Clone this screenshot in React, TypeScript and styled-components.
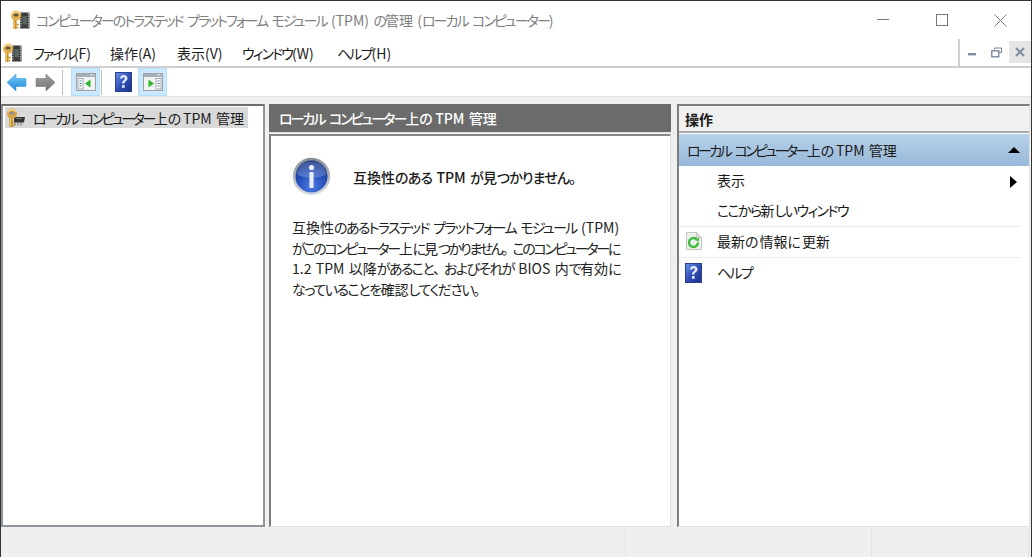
import React from "react";
import styled, { createGlobalStyle } from "styled-components";

const Global = createGlobalStyle`
  html, body { margin: 0; padding: 0; background: #fff; }
  #root { width: 1032px; height: 557px; overflow: hidden; }
  * { box-sizing: border-box; }
`;

const Win = styled.div`
  width: 1032px;
  height: 557px;
  display: flex;
  flex-direction: column;
  border-top: 1px solid #333;
  border-left: 1px solid #333;
  border-right: 1px solid #333;
  font-family: "Noto Sans CJK JP", "Noto Sans", sans-serif;
  font-feature-settings: "palt";
  font-size: 14px;
  color: #1a1a1a;
  background: #fff;
`;

const Kana = styled.span`
  letter-spacing: var(--k, -1.45px);
`;
const Punct = styled.span`
  font-feature-settings: normal;
  letter-spacing: -3px;
`;
const Gap = styled.span`
  word-spacing: 1.2px;
`;

/* Kana runs are set tighter than kanji and Latin, as the narrow-kana UI font of the reference does. */
const J = ({ children }: { children: string }) => {
  const parts = children.split(/([\u3041-\u309f\u30a0-\u30ff]+|[、。])/).filter(Boolean);
  return (
    <>
      {parts.map((p, i) =>
        /^[、。]$/.test(p) ? (
          <Punct key={i}>{p}</Punct>
        ) : /^[\u3041-\u30ff]/.test(p) ? (
          <Kana key={i}>{p}</Kana>
        ) : (
          <Gap key={i}>{p}</Gap>
        )
      )}
    </>
  );
};

const TitleBar = styled.div`
  height: 38px;
  flex: none;
  display: flex;
  align-items: center;
  padding-left: 9px;
  gap: 6px;
`;
const TitleText = styled.div`
  flex: 1;
  color: #808080;
  font-size: 14px;
  white-space: pre;
  --k: -1.95px;
  margin-top: -1px;
`;
const Caption = styled.div`
  width: 59px;
  height: 38px;
  display: flex;
  align-items: center;
  justify-content: center;
`;
const Captions = styled.div`
  display: flex;
  margin-right: 1px;
`;

const MenuBar = styled.div`
  height: 29px;
  flex: none;
  display: flex;
  align-items: center;
  padding-left: 1px;
  border-bottom: 2px solid #cfcfcf;
`;
const MenuItems = styled.div`
  display: flex;
  flex: 1;
  margin-left: 11px;
  --k: -1.9px;
`;
const MenuItem = styled.span<{ $w: number }>`
  width: ${(p) => p.$w}px;
  font-size: 14px;
  white-space: nowrap;
`;
const Mdi = styled.div`
  align-self: stretch;
  display: flex;
  gap: 2px;
  padding: 2px 0 3px 1px;
  border-left: 2px solid #cfcfcf;
  margin-bottom: -2px;
  border-bottom: 2px solid #cfcfcf;
`;
const MdiBtn = styled.div<{ $on?: boolean }>`
  width: 22px;
  display: flex;
  align-items: center;
  justify-content: center;
  background: ${(p) => (p.$on ? "#e5e5e5" : "#fff")};
`;

const ToolBar = styled.div`
  height: 29px;
  flex: none;
  display: flex;
  align-items: center;
  padding-left: 5px;
  border-bottom: 1px solid #e4e4e4;
`;
const Sep = styled.div<{ $l: number; $r: number }>`
  width: 1px;
  height: 25px;
  background: #bdbdbd;
  margin: 0 ${(p) => p.$r}px 0 ${(p) => p.$l}px;
`;
const ToolBtn = styled.div`
  width: 29px;
  height: 28px;
  display: flex;
  align-items: center;
  justify-content: center;
  background: #cce8ff;
  border: 1px solid #b5deff;
`;
const IconCell = styled.div<{ $w: number; $mr?: number }>`
  width: ${(p) => p.$w}px;
  margin-right: ${(p) => p.$mr ?? 0}px;
  display: flex;
  justify-content: center;
  align-items: center;
`;

const Main = styled.div`
  flex: 1;
  min-height: 0;
  display: flex;
  background: #efefef;
  padding: 7px 0 0 0;
`;
const Tree = styled.div`
  width: 264px;
  background: #fff;
  border: 2px solid #8f959b;
  border-top-color: #6d6d6d;
  padding: 1px 2px;
  margin-right: 4px;
`;
const TreeRow = styled.div`
  height: 21px;
  width: 243px;
  background: #d9d9d9;
  display: flex;
  align-items: center;
  padding-left: 1px;
  gap: 7px;
  white-space: pre;
  --k: -2.5px;
  svg { flex: none; }
`;
const Center = styled.div`
  width: 402px;
  display: flex;
  flex-direction: column;
  margin-right: 6px;
`;
const CenterHead = styled.div`
  height: 29px;
  flex: none;
  background: #6b6b6b;
  color: #fff;
  font-weight: 500;
  display: flex;
  align-items: center;
  padding-left: 10px;
  border-bottom: 1px solid #e4e4e4;
  white-space: pre;
  --k: -2px;
`;
const CenterBody = styled.div`
  flex: 1;
  margin-top: 1px;
  background: #fff;
  border-top: 2px solid #8a8a8a;
  border-left: 2px solid #7d7d7d;
  border-right: 1px solid #e2e2e2;
  border-bottom: 1px solid #e2e2e2;
  padding: 20px 0 0 21px;
`;
const InfoRow = styled.div`
  display: flex;
  align-items: center;
  gap: 22px;
  height: 40px;
`;
const InfoTitle = styled.div`
  font-weight: 500;
  font-size: 14px;
  white-space: pre;
  margin-top: 2px;
  --k: -0.85px;
`;
const Para = styled.div`
  margin-top: 21px;
  line-height: 20.67px;
  color: #222;
`;
const ParaLine = styled.div<{ $k: number }>`
  white-space: pre;
  --k: ${(p) => p.$k}px;
`;
const Actions = styled.div`
  flex: 1;
  display: flex;
  flex-direction: column;
  background: #fff;
  border-top: 2px solid #7d7d7d;
  border-left: 2px solid #7d7d7d;
  border-right: 1px solid #e2e2e2;
  border-bottom: 1px solid #e2e2e2;
  margin-right: 1px;
`;
const ActionsHead = styled.div`
  height: 27px;
  flex: none;
  background: #f0f0f0;
  border-bottom: 2px solid #a8a8a8;
  font-weight: 700;
  padding-left: 6px;
  display: flex;
  align-items: center;
`;
const Section = styled.div`
  height: 32px;
  flex: none;
  margin-top: 1px;
  background: linear-gradient(#b7d1e9, #97b8d8);
  display: flex;
  align-items: center;
  justify-content: space-between;
  padding: 0 9px 0 8px;
  white-space: pre;
  --k: -2.6px;
`;
const ActionRow = styled.div<{ $line?: boolean; $h: number }>`
  height: ${(p) => p.$h}px;
  display: grid;
  grid-template-columns: 38px 1fr 11px;
  align-items: center;
  margin-right: 8px;
  border-bottom: ${(p) => (p.$line ? "1px solid #ececec" : "none")};
`;
const RowLabel = styled.span<{ $k?: number }>`
  margin-top: -3px;
  ${(p) => (p.$k !== undefined ? `--k: ${p.$k}px;` : "")}
`;
const ActionIcon = styled.div`
  display: flex;
  justify-content: flex-start;
  padding-left: 6px;
  margin-top: -2px;
`;
const StatusBar = styled.div`
  height: 30px;
  flex: none;
  display: flex;
  background: #efefef;
  padding-top: 1px;
`;
const StatusCell = styled.div<{ $w: number; $line?: boolean }>`
  width: ${(p) => p.$w}px;
  border-right: ${(p) => (p.$line ? "1px solid #e2e2e2" : "none")};
`;

const TpmIcon = ({ size = 20, low = false }: { size?: number; low?: boolean }) => (
  <svg width={size} height={size} viewBox="0 0 20 20">
    {low ? (
      <g>
        <path d="M8 9h11l-1 5.500H8z" fill="#333" />
        <path d="M9 15v2.500M12 15v2.500M15 15v2.500" stroke="#666" strokeWidth="1" />
        <path d="M10 10.500h6" stroke="#777" />
      </g>
    ) : (
      <g>
        <rect x="10" y="2.500" width="9.500" height="16" fill="#3a3a3a" />
        <path d="M18.500 3v15M10.800 3v15" stroke="#b5b5b5" strokeWidth="1.300" strokeDasharray="1.400 1.100" />
        <rect x="12.500" y="6" width="4.500" height="8.500" fill="#566464" />
      </g>
    )}
    <path d="M5 9v10" stroke="#c48c23" strokeWidth="3.200" />
    <path d="M4.400 9v9.500" stroke="#f0c364" strokeWidth="1.200" />
    <path d="M6.500 14.500h2.200M6.500 17.500h1.800" stroke="#c48c23" strokeWidth="1.500" />
    <circle cx="6" cy="5.600" r="5" fill={low ? "#d5a544" : "#e3b04c"} />
    <path d="M1.800 4.500A4.500 4.500 0 0 1 10 4" fill="none" stroke="#f7dc9a" strokeWidth="1.200" />
    <ellipse cx="6" cy="5" rx="2.600" ry="1.600" fill={low ? "#8f8f8f" : "#5c5540"} />
  </svg>
);

const HelpIcon = ({ w = 17, h = 20 }: { w?: number; h?: number }) => (
  <svg width={w} height={h} viewBox="0 0 17 20">
    <defs>
      <linearGradient id="hb" x1="0" y1="0" x2="1" y2="1">
        <stop offset="0" stopColor="#6f92e6" />
        <stop offset=".5" stopColor="#2f50b8" />
        <stop offset="1" stopColor="#1b2f80" />
      </linearGradient>
    </defs>
    <rect x=".5" y=".5" width="16" height="19" fill="url(#hb)" stroke="#2a3f90" />
    <path d="M5 6.500C5 4 7 3 8.700 3c2.300 0 3.800 1.400 3.800 3.300 0 2.900-3 2.800-3 5.200H7c0-3.100 2.800-3.200 2.800-5 0-.8-.5-1.300-1.200-1.300-.8 0-1.200.7-1.200 1.300z" fill="#e4ecfb" />
    <rect x="7" y="13" width="2.600" height="2.800" fill="#e4ecfb" />
  </svg>
);

const PaneIcon = ({ right = false }: { right?: boolean }) => (
  <svg width="20" height="18" viewBox="0 0 20 18">
    <rect x=".5" y=".5" width="19" height="17" fill="#f2f4f4" stroke="#9aa4a8" />
    <rect x="1" y="1" width="18" height="3" fill="#a6b0b4" />
    <path d="M14 1.800h1.400M16 1.800h1.400" stroke="#fff" />
    {right ? (
      <g>
        <rect x="13" y="5.500" width="5" height="10.500" fill="#fff" stroke="#8a9aa8" strokeWidth=".8" />
        <path d="M14.500 8h2M14.500 10.500h2M14.500 13h2" stroke="#5c7a96" />
        <path d="M5.500 6.500l5.500 4-5.500 4z" fill="#2fb52a" />
      </g>
    ) : (
      <g>
        <rect x="2" y="5.500" width="5" height="10.500" fill="#fff" stroke="#8a9aa8" strokeWidth=".8" />
        <path d="M3.500 8h2M3.500 10.500h2M3.500 13h2" stroke="#5c7a96" />
        <path d="M14.500 6.500L9 10.500l5.500 4z" fill="#2fb52a" />
      </g>
    )}
  </svg>
);

const BackArrow = () => (
  <svg width="21" height="19" viewBox="0 0 21 19">
    <defs>
      <linearGradient id="ba" x1="0" y1="0" x2="0" y2="1">
        <stop offset="0" stopColor="#7ccbf7" />
        <stop offset="1" stopColor="#1b86d8" />
      </linearGradient>
    </defs>
    <path d="M10 1L1 9.500 10 18v-4.500h10v-8H10z" fill="url(#ba)" stroke="#3d9fe0" strokeWidth=".6" />
  </svg>
);
const FwdArrow = () => (
  <svg width="21" height="19" viewBox="0 0 21 19">
    <defs>
      <linearGradient id="fa" x1="0" y1="0" x2="0" y2="1">
        <stop offset="0" stopColor="#a6a6a6" />
        <stop offset="1" stopColor="#6e6e6e" />
      </linearGradient>
    </defs>
    <path d="M11 1l9 8.500L11 18v-4.500H1v-8h10z" fill="url(#fa)" stroke="#7a7a7a" strokeWidth=".6" />
  </svg>
);

const InfoIcon = () => (
  <svg width="39" height="39" viewBox="0 0 39 39">
    <defs>
      <radialGradient id="ib" cx=".5" cy=".8" r=".8">
        <stop offset="0" stopColor="#4c7de4" />
        <stop offset=".65" stopColor="#1f47b0" />
        <stop offset="1" stopColor="#152f78" />
      </radialGradient>
      <linearGradient id="ir" x1="0" y1="0" x2="0" y2="1">
        <stop offset="0" stopColor="#868f98" />
        <stop offset="1" stopColor="#dcdfe2" />
      </linearGradient>
    </defs>
    <circle cx="19.500" cy="19.500" r="18.700" fill="url(#ir)" />
    <circle cx="19.500" cy="19.500" r="16" fill="url(#ib)" />
    <path d="M4.500 17C6 9 12 4.500 19.500 4.500S33 9 34.500 17C28 22 11 22 4.500 17z" fill="#fff" opacity=".2" />
    <circle cx="19.500" cy="10.500" r="2.600" fill="#e8eef8" />
    <rect x="17.400" y="15" width="4.200" height="16" rx="1" fill="#e8eef8" />
  </svg>
);

const RefreshIcon = () => (
  <svg width="18" height="20" viewBox="0 0 18 20">
    <path d="M1.500 1.500h10l5 5v12h-15z" fill="#eef0ea" stroke="#c2c5bc" />
    <path d="M11.500 1.500v5h5" fill="#dfe0da" stroke="#c2c5bc" />
    <path d="M13 11.500a4.500 4.500 0 1 1-1.600-3.400" fill="none" stroke="#3dbb3d" strokeWidth="2.400" />
    <path d="M14 6.500l-.2 4-3.800-1.400z" fill="#3dbb3d" />
  </svg>
);

const TREE = "ローカル コンピューター上の TPM 管理";

const App = () => (
  <Win>
    <Global />
    <TitleBar>
      <TpmIcon size={20} />
      <TitleText><J>コンピューターのトラステッド プラットフォーム モジュール (TPM) の管理 (ローカル コンピューター)</J></TitleText>
      <Captions>
        <Caption>
          <svg width="12" height="12" viewBox="0 0 12 12"><path d="M0 5.500h12" stroke="#777" /></svg>
        </Caption>
        <Caption>
          <svg width="12" height="12" viewBox="0 0 12 12"><rect x=".5" y=".5" width="11" height="11" fill="none" stroke="#777" /></svg>
        </Caption>
        <Caption>
          <svg width="13" height="13" viewBox="0 0 13 13"><path d="M.5.5l12 12M12.500.5l-12 12" stroke="#777" /></svg>
        </Caption>
      </Captions>
    </TitleBar>
    <MenuBar>
      <TpmIcon size={20} />
      <MenuItems>
        <MenuItem $w={77}><J>ファイル(F)</J></MenuItem>
        <MenuItem $w={67}>操作(A)</MenuItem>
        <MenuItem $w={65}>表示(V)</MenuItem>
        <MenuItem $w={95}><J>ウィンドウ(W)</J></MenuItem>
        <MenuItem $w={80}><J>ヘルプ(H)</J></MenuItem>
      </MenuItems>
      <Mdi>
        <MdiBtn>
          <svg width="10" height="10" viewBox="0 0 10 10"><rect x="1" y="6" width="8" height="2.400" fill="#7f8fa3" /></svg>
        </MdiBtn>
        <MdiBtn>
          <svg width="11" height="11" viewBox="0 0 11 11"><path d="M3.500 2.500v-1.500h7v4.500H8" fill="none" stroke="#6f8097" /><rect x=".8" y="3.800" width="7" height="6" fill="none" stroke="#6f8097" strokeWidth="1.300" /></svg>
        </MdiBtn>
        <MdiBtn $on>
          <svg width="10" height="10" viewBox="0 0 10 10"><path d="M1 1l8 8M9 1L1 9" stroke="#7f8fa3" strokeWidth="2.200" /></svg>
        </MdiBtn>
      </Mdi>
    </MenuBar>
    <ToolBar>
      <IconCell $w={21} $mr={8}><BackArrow /></IconCell>
      <IconCell $w={21}><FwdArrow /></IconCell>
      <Sep $l={6} $r={8} />
      <ToolBtn><PaneIcon /></ToolBtn>
      <Sep $l={1} $r={13} />
      <IconCell $w={17} $mr={6}><HelpIcon /></IconCell>
      <ToolBtn><PaneIcon right /></ToolBtn>
    </ToolBar>
    <Main>
      <Tree>
        <TreeRow>
          <TpmIcon size={20} low />
          <span><J>{TREE}</J></span>
        </TreeRow>
      </Tree>
      <Center>
        <CenterHead><J>{TREE}</J></CenterHead>
        <CenterBody>
          <InfoRow>
            <InfoIcon />
            <InfoTitle><J>互換性のある TPM が見つかりません。</J></InfoTitle>
          </InfoRow>
          <Para>
            <ParaLine $k={-1.65}><J>互換性のあるトラステッド プラットフォーム モジュール (TPM)</J></ParaLine>
            <ParaLine $k={-2.3}><J>がこのコンピューター上に見つかりません。このコンピューターに</J></ParaLine>
            <ParaLine $k={-1.6}><J>1.2 TPM 以降があること、およびそれが BIOS 内で有効に</J></ParaLine>
            <ParaLine $k={-1.45}><J>なっていることを確認してください。</J></ParaLine>
          </Para>
        </CenterBody>
      </Center>
      <Actions>
        <ActionsHead>操作</ActionsHead>
        <Section>
          <span><J>{TREE}</J></span>
          <svg width="12" height="6" viewBox="0 0 12 6"><path d="M6 0l6 6H0z" fill="#000" /></svg>
        </Section>
        <ActionRow $h={31}>
          <span />
          <RowLabel>表示</RowLabel>
          <svg width="7" height="12" viewBox="0 0 7 12"><path d="M0 0l7 6-7 6z" fill="#000" /></svg>
        </ActionRow>
        <ActionRow $h={30} $line>
          <span />
          <RowLabel $k={-1.6}><J>ここから新しいウィンドウ</J></RowLabel>
        </ActionRow>
        <ActionRow $h={31} $line>
          <ActionIcon><RefreshIcon /></ActionIcon>
          <RowLabel $k={1}><J>最新の情報に更新</J></RowLabel>
        </ActionRow>
        <ActionRow $h={31}>
          <ActionIcon><HelpIcon w={17} h={20} /></ActionIcon>
          <RowLabel $k={-1.7}><J>ヘルプ</J></RowLabel>
        </ActionRow>
      </Actions>
    </Main>
    <StatusBar>
      <StatusCell $w={625} $line />
      <StatusCell $w={246} $line />
      <StatusCell $w={157} $line />
    </StatusBar>
  </Win>
);

export default App;
